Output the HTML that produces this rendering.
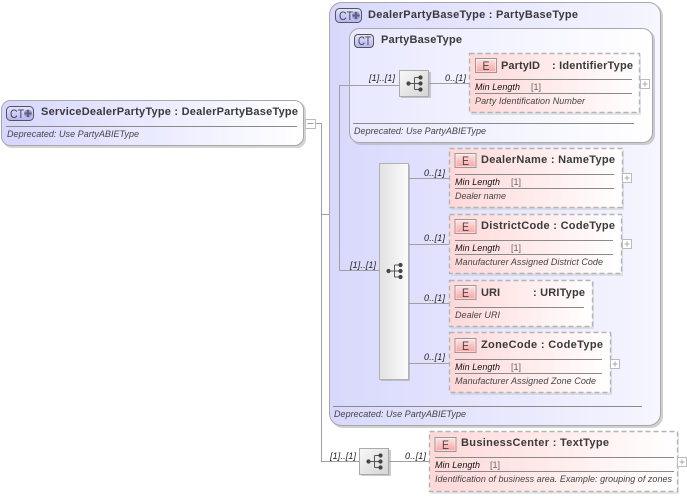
<!DOCTYPE html>
<html><head><meta charset="utf-8"><style>
html,body{margin:0;padding:0;background:#fff;width:687px;height:496px;overflow:hidden}
svg{display:block;position:absolute;left:0;top:0;filter:blur(.3px)}
text{font-family:"Liberation Sans",sans-serif;fill:#333}
.t{font-size:11px;font-weight:bold;fill:#3a3a3a}
.i{font-size:9px;font-style:italic;fill:#444}
.m{font-size:9px;font-style:italic;fill:#111}
.v{font-size:9px;fill:#666}
.c{font-size:9px;font-style:italic;fill:#222}
.l{stroke:#a0a0a0;stroke-width:1;fill:none}
.s{stroke:#8a8a8a;stroke-width:1;fill:none}
.e{stroke:#b4b4b4;stroke-width:1.4;stroke-dasharray:5 3}
.b{font-size:12px;fill:#444}
</style></head><body>
<svg width="687" height="496" viewBox="0 0 687 496" xmlns="http://www.w3.org/2000/svg">
<defs>
<linearGradient id="ct" x1="0" x2="1" y1="0" y2="0"><stop offset="0" stop-color="#d6d6ff"/><stop offset="1" stop-color="#ffffff"/></linearGradient>
<linearGradient id="out" x1="0" x2="1" y1="0" y2="0"><stop offset="0" stop-color="#d8d8fd"/><stop offset="1" stop-color="#f6f6ff"/></linearGradient>
<linearGradient id="inn" x1="0" x2="1" y1="0" y2="0"><stop offset="0" stop-color="#e8e8ff"/><stop offset="1" stop-color="#ffffff"/></linearGradient>
<linearGradient id="el" x1="0" x2="1" y1="0" y2="0"><stop offset="0" stop-color="#ffd8d8"/><stop offset="1" stop-color="#ffffff"/></linearGradient>
<linearGradient id="seq" x1="0" x2="1" y1="0" y2="1"><stop offset="0" stop-color="#f8f8f8"/><stop offset="1" stop-color="#d4d4d4"/></linearGradient>
<linearGradient id="seq2" x1="0" x2="1" y1="0" y2="0"><stop offset="0" stop-color="#e2e2e2"/><stop offset="1" stop-color="#fbfbfb"/></linearGradient>
<linearGradient id="eb" x1="0" x2="0" y1="0" y2="1"><stop offset="0" stop-color="#ffe6e6"/><stop offset="1" stop-color="#fba0a0"/></linearGradient>
<linearGradient id="cb" x1="0" x2="0" y1="0" y2="1"><stop offset="0" stop-color="#e4e4ff"/><stop offset="1" stop-color="#b4b4f4"/></linearGradient>
<g id="tree"><circle cx="-6" cy="0" r="2.1" fill="#444"/><path d="M-6 0H0M0-6V6M0-6H6M0 0H6M0 6H6" stroke="#555" fill="none"/><circle cx="6" cy="-6" r="2.1" fill="#444"/><circle cx="6" cy="0" r="2.1" fill="#444"/><circle cx="6" cy="6" r="2.1" fill="#444"/></g>
<g id="plus"><rect x=".5" y=".5" width="9" height="9" fill="#fff" stroke="#bbb"/><path d="M2.5 5H7.5M5 2.5V7.5" stroke="#aaa"/></g>
<g id="ebadge"><rect x=".5" y=".5" width="21" height="14" fill="url(#eb)" stroke="#999"/><rect x="1.500" y="1.500" width="19" height="12" fill="none" stroke="#fff" stroke-opacity=".5"/><text x="7.500" y="12" class="b" textLength="7" lengthAdjust="spacingAndGlyphs">E</text></g>
<g id="ctplus"><circle cx="0" cy="0" r="4" fill="#9a9ac4"/><path d="M-3.500 0H3.500M0-3.500V3.500" stroke="#5e5e86" stroke-width="2"/></g>
</defs>

<!-- root connectors -->
<path class="l" d="M315 123.500H321.500V461.500H359M321.500 214.500H329"/>

<!-- root -->
<rect x="3" y="102" width="303" height="46" rx="9" fill="#aaa" opacity=".5"/>
<rect x="1.500" y="100.500" width="302" height="45" rx="9" fill="url(#ct)" stroke="#a8a8a8"/>
<rect x="6.500" y="106.500" width="27" height="14" rx="4" fill="url(#cb)" stroke="#555"/>
<text x="10" y="118" class="b" textLength="14" lengthAdjust="spacingAndGlyphs">CT</text>
<use href="#ctplus" x="28" y="113.500"/>
<text x="41" y="115" class="t" textLength="257">ServiceDealerPartyType : DealerPartyBaseType</text>
<path class="s" d="M6 126.500H297"/>
<text x="7" y="137" class="i" textLength="132">Deprecated: Use PartyABIEType</text>
<rect x="305.500" y="119.500" width="10" height="9" fill="#fff" stroke="#bbb"/><path d="M307.500 123.500H313.500" stroke="#999"/>

<!-- outer -->
<rect x="331" y="4" width="332" height="424" rx="12" fill="#aaa" opacity=".55"/>
<rect x="329.500" y="2.500" width="331" height="423" rx="12" fill="url(#out)" stroke="#a8a8a8"/>
<rect x="335.500" y="8.500" width="26" height="14" rx="4" fill="url(#cb)" stroke="#555"/>
<text x="339" y="20" class="b" textLength="14" lengthAdjust="spacingAndGlyphs">CT</text>
<use href="#ctplus" x="356" y="15.500"/>
<text x="368" y="18" class="t" textLength="210">DealerPartyBaseType : PartyBaseType</text>

<!-- inner -->
<rect x="351" y="30" width="304" height="115" rx="10" fill="#aaa" opacity=".55"/>
<rect x="349.500" y="28.500" width="303" height="114" rx="10" fill="url(#inn)" stroke="#a8a8a8"/>
<rect x="354.500" y="34.500" width="19" height="13" rx="3.500" fill="url(#cb)" stroke="#555"/>
<text x="358" y="45" class="b" textLength="13" lengthAdjust="spacingAndGlyphs">CT</text>
<text x="381" y="43" class="t" textLength="81">PartyBaseType</text>
<path class="l" d="M339.500 270.500V85.500H399M429 83.500H469M339.500 270.500H379"/>
<text x="369" y="81" class="c" textLength="26">[1]..[1]</text>
<text x="445" y="81" class="c" textLength="21">0..[1]</text>
<rect x="401" y="72" width="30" height="26" fill="#999" opacity=".5"/>
<rect x="399.500" y="70.500" width="29" height="26" fill="url(#seq)" stroke="#aaa"/>
<use href="#tree" x="414.500" y="83.500"/>

<!-- PartyID -->
<rect x="471" y="55" width="170" height="60" fill="#bbb" opacity=".35"/>
<rect x="469.500" y="53.500" width="170" height="59" fill="url(#el)" class="e"/>
<use href="#ebadge" x="475" y="58"/>
<text x="501" y="69" class="t" textLength="39">PartyID</text>
<text x="552" y="69" class="t" textLength="81">: IdentifierType</text>
<path class="s" d="M475 79.500H632M475 93.500H632"/>
<text x="475" y="90" class="m" textLength="45">Min Length</text>
<text x="531" y="90" class="v">[1]</text>
<text x="475" y="104" class="i" textLength="110">Party Identification Number</text>
<use href="#plus" x="640" y="79"/>
<path class="s" d="M353 123.500H634"/>
<text x="354" y="134" class="i" textLength="132">Deprecated: Use PartyABIEType</text>

<!-- big sequence -->
<path class="l" d="M408 178.500H449M408 244.500H449M408 303.500H449M408 363.500H449"/>
<rect x="381" y="165" width="29" height="216" fill="#999" opacity=".5"/>
<rect x="379.500" y="163.500" width="29" height="216" fill="url(#seq2)" stroke="#b0b0b0"/>
<use href="#tree" x="394.500" y="271"/>
<text x="350" y="268" class="c" textLength="26">[1]..[1]</text>
<text x="424" y="176" class="c" textLength="21">0..[1]</text>
<text x="424" y="241" class="c" textLength="21">0..[1]</text>
<text x="424" y="301" class="c" textLength="21">0..[1]</text>
<text x="424" y="360" class="c" textLength="21">0..[1]</text>

<!-- DealerName -->
<rect x="451" y="150" width="173" height="60" fill="#bbb" opacity=".35"/>
<rect x="449.500" y="148.500" width="173" height="59" fill="url(#el)" class="e"/>
<use href="#ebadge" x="454.500" y="153"/>
<text x="481" y="163" class="t" textLength="134">DealerName : NameType</text>
<path class="s" d="M455 174.500H614M455 188.500H614"/>
<text x="455" y="185" class="m" textLength="45">Min Length</text>
<text x="511" y="185" class="v">[1]</text>
<text x="455" y="199" class="i" textLength="51">Dealer name</text>
<use href="#plus" x="622" y="173"/>

<!-- DistrictCode -->
<rect x="451" y="216" width="172" height="60" fill="#bbb" opacity=".35"/>
<rect x="449.500" y="214.500" width="172" height="59" fill="url(#el)" class="e"/>
<use href="#ebadge" x="454.500" y="219"/>
<text x="481" y="229" class="t" textLength="134">DistrictCode : CodeType</text>
<path class="s" d="M455 240.500H613M455 254.500H613"/>
<text x="455" y="251" class="m" textLength="45">Min Length</text>
<text x="511" y="251" class="v">[1]</text>
<text x="455" y="265" class="i" textLength="148">Manufacturer Assigned District Code</text>
<use href="#plus" x="622" y="239"/>

<!-- URI -->
<rect x="451" y="282" width="143" height="47" fill="#bbb" opacity=".35"/>
<rect x="449.500" y="280.500" width="143" height="46" fill="url(#el)" class="e"/>
<use href="#ebadge" x="454.500" y="285"/>
<text x="481" y="296" class="t" textLength="19">URI</text>
<text x="533" y="296" class="t" textLength="52">: URIType</text>
<path class="s" d="M455 307.500H584"/>
<text x="455" y="318" class="i" textLength="45">Dealer URI</text>

<!-- ZoneCode -->
<rect x="451" y="334" width="161" height="61" fill="#bbb" opacity=".35"/>
<rect x="449.500" y="332.500" width="161" height="60" fill="url(#el)" class="e"/>
<use href="#ebadge" x="454.500" y="338"/>
<text x="481" y="348" class="t" textLength="122">ZoneCode : CodeType</text>
<path class="s" d="M455 359.500H602M455 373.500H602"/>
<text x="455" y="370" class="m" textLength="45">Min Length</text>
<text x="511" y="370" class="v">[1]</text>
<text x="455" y="384" class="i" textLength="141">Manufacturer Assigned Zone Code</text>
<use href="#plus" x="610" y="359"/>

<path class="s" d="M333 406.500H642"/>
<text x="334" y="417" class="i" textLength="132">Deprecated: Use PartyABIEType</text>

<!-- BusinessCenter -->
<text x="330" y="459" class="c" textLength="26">[1]..[1]</text>
<text x="405" y="459" class="c" textLength="21">0..[1]</text>
<path class="l" d="M389 461.500H429"/>
<rect x="361" y="450" width="30" height="26" fill="#999" opacity=".5"/>
<rect x="359.500" y="448.500" width="29" height="26" fill="url(#seq)" stroke="#aaa"/>
<use href="#tree" x="374.500" y="461.500"/>
<rect x="431" y="433" width="248" height="61" fill="#bbb" opacity=".35"/>
<rect x="429.500" y="431.500" width="248" height="60" fill="url(#el)" class="e"/>
<use href="#ebadge" x="434.500" y="437"/>
<text x="461" y="446" class="t" textLength="148">BusinessCenter : TextType</text>
<path class="s" d="M435 457.500H674M435 471.500H674"/>
<text x="435" y="468" class="m" textLength="45">Min Length</text>
<text x="490" y="468" class="v">[1]</text>
<text x="435" y="482" class="i" textLength="237">Identification of business area. Example: grouping of zones</text>
<use href="#plus" x="677" y="457"/>
</svg>
</body></html>
